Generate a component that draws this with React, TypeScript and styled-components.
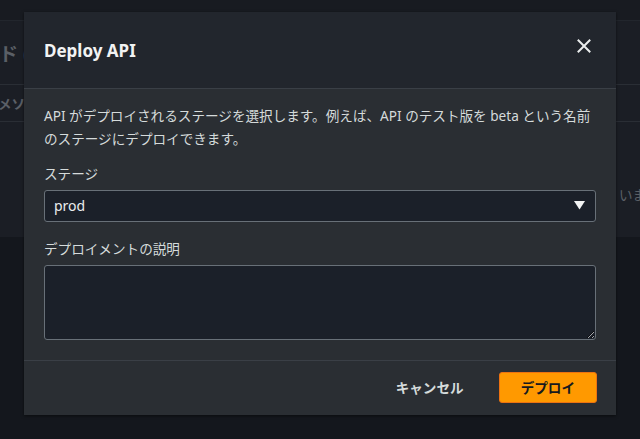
import React from "react";
import styled, { createGlobalStyle } from "styled-components";

const Global = createGlobalStyle`
  html, body { margin: 0; padding: 0; }
  body {
    width: 640px;
    height: 439px;
    overflow: hidden;
    background: #14171d;
    font-family: "Noto Sans", "Noto Sans CJK JP", sans-serif;
  }
  * { box-sizing: border-box; }
`;

const Page = styled.div`
  position: relative;
  width: 640px;
  height: 439px;
  background: #14171d;
  display: flex;
  flex-direction: column;
`;

const TopBand = styled.div`
  height: 20px;
  background: #181b21;
`;

const Panel = styled.div`
  background: #1b1e25;
  display: flex;
  flex-direction: column;
`;

const PanelHeading = styled.div`
  height: 65px;
  display: flex;
  align-items: center;
  border-top: 1px solid #22262d;
  border-bottom: 1px solid #2a2e35;
  color: #5a5f66;
  font-size: 19px;
  font-weight: 700;
  white-space: nowrap;
  margin-left: -1px;
`;

const TableHead = styled.div`
  height: 37px;
  display: flex;
  align-items: center;
  border-bottom: 1px solid #2a2e35;
  color: #5a5f66;
  font-size: 13.5px;
  font-weight: 700;
  white-space: nowrap;
  margin-left: -2px;
`;

const TableBody = styled.div`
  height: 115px;
  display: flex;
  flex-direction: column;
  align-items: flex-end;
  padding-top: 62px;
  color: #5a5f66;
  font-size: 13.5px;
  white-space: nowrap;
  overflow: hidden;
`;

const BodyText = styled.div`
  margin-right: -6px;
`;

const Backdrop = styled.div`
  position: absolute;
  inset: 0;
`;

const Modal = styled.div`
  position: absolute;
  left: 24px;
  top: 12px;
  width: 592px;
  height: 403px;
  background: #2a2e33;
  box-shadow: 0 1px 3px rgba(0, 0, 0, 0.55);
  display: flex;
  flex-direction: column;
`;

const Header = styled.div`
  height: 78px;
  background: #22262d;
  border-bottom: 1px solid #3a3f46;
  display: flex;
  align-items: flex-start;
  justify-content: space-between;
  padding: 0 20px;
`;

const Title = styled.h2`
  margin: 0;
  margin-top: 27px;
  font-size: 17px;
  line-height: 24px;
  font-weight: 700;
  color: #f2f3f3;
`;

const CloseButton = styled.button`
  margin-top: 24px;
  margin-right: 2px;
  width: 20px;
  height: 20px;
  padding: 0;
  border: none;
  background: none;
  display: flex;
  align-items: center;
  justify-content: center;
  color: #eaeded;
`;

const Body = styled.div`
  flex: 1;
  padding: 15px 20px 20px;
  display: flex;
  flex-direction: column;
`;

const Description = styled.p`
  margin: 0 0 14px;
  font-size: 13.6px;
  line-height: 23px;
  color: #d5dbdb;
`;

const Field = styled.div<{ $gap?: number }>`
  display: flex;
  flex-direction: column;
  margin-bottom: ${(p) => p.$gap ?? 0}px;
`;

const Label = styled.label`
  font-size: 13.6px;
  line-height: 20px;
  color: #d5dbdb;
  margin-bottom: 6px;
`;

const SelectBox = styled.div`
  height: 32px;
  border: 1px solid #687078;
  border-radius: 3px;
  background: #1b2029;
  display: flex;
  align-items: center;
  justify-content: space-between;
  padding: 0 10px 0 9px;
  font-size: 14px;
  color: #eaeded;
`;

const TextArea = styled.textarea`
  height: 75px;
  border: 1px solid #687078;
  border-radius: 3px;
  background: #1b2029;
  color: #eaeded;
  font-family: inherit;
  font-size: 14px;
  resize: vertical;
  outline: none;
  padding: 6px 9px;
  display: block;
  width: 100%;
`;

const Footer = styled.div`
  height: 56px;
  border-top: 1px solid #3a3f46;
  display: flex;
  align-items: center;
  justify-content: flex-end;
  gap: 14px;
  padding: 0 19px 0 20px;
`;

const Button = styled.button<{ $primary?: boolean }>`
  height: 31px;
  padding: 0 ${(p) => (p.$primary ? 21 : 20)}px;
  border-radius: 3px;
  border: 1px solid ${(p) => (p.$primary ? "#ec7211" : "transparent")};
  background: ${(p) => (p.$primary ? "#ff9900" : "transparent")};
  color: ${(p) => (p.$primary ? "#16191f" : "#d5dbdb")};
  font-family: inherit;
  font-size: 13.6px;
  font-weight: 700;
  line-height: 1;
  display: flex;
  align-items: center;
`;

export default function App() {
  return (
    <>
      <Global />
      <Page>
        <TopBand />
        <Panel>
          <PanelHeading>ド (</PanelHeading>
          <TableHead>メソ</TableHead>
          <TableBody>
            <BodyText>いま</BodyText>
          </TableBody>
        </Panel>
        <Backdrop>
          <Modal role="dialog" aria-label="Deploy API">
            <Header>
              <Title>Deploy API</Title>
              <CloseButton aria-label="閉じる">
                <svg width="14" height="14" viewBox="0 0 14 14">
                  <path
                    d="M1.5 1.5 L12.5 12.5 M12.5 1.5 L1.5 12.5"
                    stroke="currentColor"
                    strokeWidth="2"
                    strokeLinecap="square"
                    fill="none"
                  />
                </svg>
              </CloseButton>
            </Header>
            <Body>
              <Description>
                API がデプロイされるステージを選択します。例えば、API のテスト版を beta という名前のステージにデプロイできます。
              </Description>
              <Field $gap={17}>
                <Label>ステージ</Label>
                <SelectBox>
                  <span>prod</span>
                  <svg width="11" height="9" viewBox="0 0 11 9">
                    <path d="M0 0 H11 L5.5 8.5 Z" fill="#f2f3f3" />
                  </svg>
                </SelectBox>
              </Field>
              <Field>
                <Label>デプロイメントの説明</Label>
                <TextArea />
              </Field>
            </Body>
            <Footer>
              <Button>キャンセル</Button>
              <Button $primary>デプロイ</Button>
            </Footer>
          </Modal>
        </Backdrop>
      </Page>
    </>
  );
}
